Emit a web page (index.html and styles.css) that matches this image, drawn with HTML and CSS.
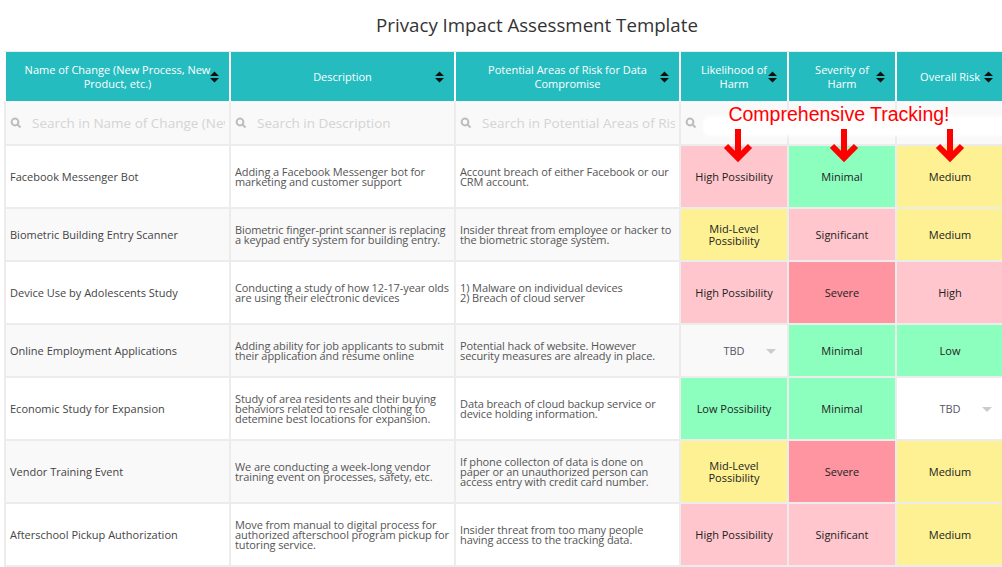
FILE: index.html
```html
<!DOCTYPE html>
<html lang="en">
<head>
    <meta charset="UTF-8">
    <title>Privacy Impact Assessment Template</title>
    <link rel="stylesheet" href="styles.css">
</head>
<body>
<div class="page">
    <h1 class="title">Privacy Impact Assessment Template</h1>

    <div class="sheet">
        <table class="pia">
            <colgroup>
                <col class="c-wide first">
                <col class="c-wide">
                <col class="c-wide">
                <col class="c-narrow">
                <col class="c-narrow">
                <col class="c-narrow">
            </colgroup>
            <thead>
                <tr class="head">
                    <th>Name of Change (New Process, New Product, etc.)<span class="sort"><svg width="9" height="12" viewBox="0 0 9 12"><path d="M0 5L4.5 0.5L9 5ZM0 7L4.5 11.5L9 7Z"/></svg></span></th>
                    <th>Description<span class="sort"><svg width="9" height="12" viewBox="0 0 9 12"><path d="M0 5L4.5 0.5L9 5ZM0 7L4.5 11.5L9 7Z"/></svg></span></th>
                    <th>Potential Areas of Risk for Data Compromise<span class="sort"><svg width="9" height="12" viewBox="0 0 9 12"><path d="M0 5L4.5 0.5L9 5ZM0 7L4.5 11.5L9 7Z"/></svg></span></th>
                    <th>Likelihood of Harm<span class="sort"><svg width="9" height="12" viewBox="0 0 9 12"><path d="M0 5L4.5 0.5L9 5ZM0 7L4.5 11.5L9 7Z"/></svg></span></th>
                    <th>Severity of Harm<span class="sort"><svg width="9" height="12" viewBox="0 0 9 12"><path d="M0 5L4.5 0.5L9 5ZM0 7L4.5 11.5L9 7Z"/></svg></span></th>
                    <th>Overall Risk<span class="sort"><svg width="9" height="12" viewBox="0 0 9 12"><path d="M0 5L4.5 0.5L9 5ZM0 7L4.5 11.5L9 7Z"/></svg></span></th>
                </tr>
                <tr class="search">
                    <td><div class="filter"><svg class="mag" width="12" height="12" viewBox="0 0 12 12"><circle cx="5" cy="5" r="3.4"/><path d="M7.5 7.5L10.5 10.5"/></svg><input type="text" placeholder="Search in Name of Change (New Process, New Product, etc.)"></div></td>
                    <td><div class="filter"><svg class="mag" width="12" height="12" viewBox="0 0 12 12"><circle cx="5" cy="5" r="3.4"/><path d="M7.5 7.5L10.5 10.5"/></svg><input type="text" placeholder="Search in Description"></div></td>
                    <td><div class="filter"><svg class="mag" width="12" height="12" viewBox="0 0 12 12"><circle cx="5" cy="5" r="3.4"/><path d="M7.5 7.5L10.5 10.5"/></svg><input type="text" placeholder="Search in Potential Areas of Risk for Data Compromise"></div></td>
                    <td><div class="filter"><svg class="mag" width="12" height="12" viewBox="0 0 12 12"><circle cx="5" cy="5" r="3.4"/><path d="M7.5 7.5L10.5 10.5"/></svg><input type="text" placeholder="Search in Likelihood of Harm"></div></td>
                    <td><div class="filter"><svg class="mag" width="12" height="12" viewBox="0 0 12 12"><circle cx="5" cy="5" r="3.4"/><path d="M7.5 7.5L10.5 10.5"/></svg><input type="text" placeholder="Search in Severity of Harm"></div></td>
                    <td><div class="filter"><svg class="mag" width="12" height="12" viewBox="0 0 12 12"><circle cx="5" cy="5" r="3.4"/><path d="M7.5 7.5L10.5 10.5"/></svg><input type="text" placeholder="Search in Overall Risk"></div></td>
                </tr>
            </thead>
            <tbody>
                <tr class="tall">
                    <td class="name">Facebook Messenger Bot</td>
                    <td class="desc">Adding a Facebook Messenger bot for<br>marketing and customer support</td>
                    <td class="desc">Account breach of either Facebook or our<br>CRM account.</td>
                    <td class="rate pink">High Possibility</td>
                    <td class="rate green">Minimal</td>
                    <td class="rate yellow">Medium</td>
                </tr>
                <tr class="short">
                    <td class="name">Biometric Building Entry Scanner</td>
                    <td class="desc">Biometric finger-print scanner is replacing<br>a keypad entry system for building entry.</td>
                    <td class="desc">Insider threat from employee or hacker to<br>the biometric storage system.</td>
                    <td class="rate yellow">Mid-Level<br>Possibility</td>
                    <td class="rate pink">Significant</td>
                    <td class="rate yellow">Medium</td>
                </tr>
                <tr class="tall">
                    <td class="name">Device Use by Adolescents Study</td>
                    <td class="desc">Conducting a study of how 12-17-year olds<br>are using their electronic devices</td>
                    <td class="desc">1) Malware on individual devices<br>2) Breach of cloud server</td>
                    <td class="rate pink">High Possibility</td>
                    <td class="rate red">Severe</td>
                    <td class="rate pink">High</td>
                </tr>
                <tr class="short">
                    <td class="name">Online Employment Applications</td>
                    <td class="desc">Adding ability for job applicants to submit<br>their application and resume online</td>
                    <td class="desc">Potential hack of website. However<br>security measures are already in place.</td>
                    <td class="rate tbd">TBD<span class="caret"></span></td>
                    <td class="rate green">Minimal</td>
                    <td class="rate green">Low</td>
                </tr>
                <tr class="tall">
                    <td class="name">Economic Study for Expansion</td>
                    <td class="desc">Study of area residents and their buying<br>behaviors related to resale clothing to<br>detemine best locations for expansion.</td>
                    <td class="desc">Data breach of cloud backup service or<br>device holding information.</td>
                    <td class="rate green">Low Possibility</td>
                    <td class="rate green">Minimal</td>
                    <td class="rate tbd">TBD<span class="caret"></span></td>
                </tr>
                <tr class="tall">
                    <td class="name">Vendor Training Event</td>
                    <td class="desc">We are conducting a week-long vendor<br>training event on processes, safety, etc.</td>
                    <td class="desc">If phone collecton of data is done on<br>paper or an unauthorized person can<br>access entry with credit card number.</td>
                    <td class="rate yellow">Mid-Level<br>Possibility</td>
                    <td class="rate red">Severe</td>
                    <td class="rate yellow">Medium</td>
                </tr>
                <tr class="tall">
                    <td class="name">Afterschool Pickup Authorization</td>
                    <td class="desc">Move from manual to digital process for<br>authorized afterschool program pickup for<br>tutoring service.</td>
                    <td class="desc">Insider threat from too many people<br>having access to the tracking data.</td>
                    <td class="rate pink">High Possibility</td>
                    <td class="rate pink">Significant</td>
                    <td class="rate yellow">Medium</td>
                </tr>
            </tbody>
        </table>

        <!-- annotation pasted over the filter row -->
        <div class="blot"></div>
        <div class="callout">
            <div class="callout-text">Comprehensive Tracking!</div>
            <div class="arrows">
                <svg width="30" height="34" viewBox="0 0 30 34"><path d="M15 1V29M3 18L15 30L27 18"/></svg>
                <svg width="30" height="34" viewBox="0 0 30 34"><path d="M15 1V29M3 18L15 30L27 18"/></svg>
                <svg width="30" height="34" viewBox="0 0 30 34"><path d="M15 1V29M3 18L15 30L27 18"/></svg>
            </div>
        </div>
    </div>
</div>
</body>
</html>
```

FILE: styles.css
```css
body {
    margin: 0;
    background: #fff;
    overflow: hidden;
    font-family: 'Open Sans', sans-serif;
}

.page {
    width: 1074px;
}

.title {
    margin: 0;
    height: 51px;
    line-height: 49px;
    font-size: 18.7px;
    font-weight: 400;
    color: #333;
    text-align: center;
}

.sheet {
    position: relative;
    margin-left: 4px;
}

.pia {
    border-collapse: separate;
    border-spacing: 0;
    table-layout: fixed;
    width: 1001px;
    border-top: 1px solid #ececec;
}

.pia col { width: 225px; }
.pia col.first { width: 227px; }
.pia col.c-narrow { width: 108px; }

.pia th,
.pia td {
    box-sizing: border-box;
    border-right: 2px solid #ececec;
    border-bottom: 2px solid #ececec;
    vertical-align: middle;
}

.pia tr > :first-child { border-left: 2px solid #ececec; }

/* header */
.head { height: 49px; }

.head th {
    position: relative;
    background: #25bcbf;
    color: #fff;
    font-size: 11px;
    font-weight: 400;
    line-height: 14px;
    padding: 0 16px;
    text-align: center;
    border-right-color: #fff;
    border-bottom: 0;
}

.head th:first-child { border-left-color: #fff; }

.sort {
    position: absolute;
    right: 10px;
    top: 50%;
    margin-top: -6px;
    height: 12px;
}

.sort svg { display: block; fill: #111; }

/* filter row */
.search { height: 45px; }

.search td {
    background: #f9f9f9;
    padding: 0 4px;
}

.filter {
    display: flex;
    align-items: center;
    overflow: hidden;
}

.mag {
    flex: none;
    fill: none;
    stroke: #bdbdbd;
    stroke-width: 2;
    margin-right: 10px;
}

.filter input {
    flex: 1;
    min-width: 0;
    border: 0;
    padding: 0;
    background: transparent;
    font-family: 'Open Sans', sans-serif;
    font-size: 13.5px;
    outline: none;
}

.filter input::placeholder { color: #d4d4d4; }

/* body rows */
.tall { height: 63px; }
.short { height: 53px; }

.pia tbody td {
    padding: 0 4px;
    font-size: 11px;
    color: #444;
    background: #fff;
}

.pia tbody tr:nth-child(even) td { background: #f9f9f9; }

.pia td.desc {
    line-height: 10px;
    color: #555;
    letter-spacing: -0.1px;
}

.pia td.rate {
    text-align: center;
    line-height: 12px;
    color: #222;
}

.pia tbody tr td.pink { background: #ffc6cd; }
.pia tbody tr td.green { background: #8cfebe; }
.pia tbody tr td.yellow { background: #fef193; }
.pia tbody tr td.red { background: #fe95a0; }

.pia td.tbd {
    position: relative;
    color: #556;
}

.caret {
    position: absolute;
    right: 11px;
    top: 50%;
    margin-top: -2px;
    border-left: 5px solid transparent;
    border-right: 5px solid transparent;
    border-top: 5px solid #ccc;
}

/* annotation */
.blot {
    position: absolute;
    left: 699px;
    top: 65px;
    width: 310px;
    height: 20px;
    background: #fff;
    border-radius: 6px;
    filter: blur(1.5px);
}

.callout {
    position: absolute;
    left: 677px;
    top: 52px;
    width: 324px;
}

.callout-text {
    padding-right: 8px;
    text-align: center;
    font-family: 'Liberation Sans', Arial, sans-serif;
    font-size: 19.5px;
    line-height: 22px;
    color: #f00;
}

.arrows {
    display: flex;
    margin-top: 3px;
}

.arrows svg {
    display: block;
    margin: 0 38px;
    fill: none;
    stroke: #f00;
    stroke-width: 6;
    stroke-linejoin: miter;
}

.arrows svg:first-child { margin-left: 42px; }
```
